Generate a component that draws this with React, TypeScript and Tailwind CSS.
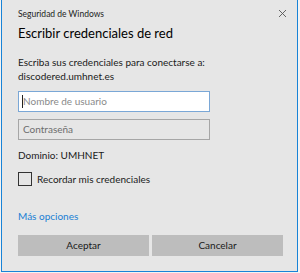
import React from "react";

const font = { fontFamily: '"Segoe UI", Lato, "Noto Sans", sans-serif' };

export default function App() {
  return (
    <div className="flex h-[273px] w-[300px] bg-[#f3f3f3] pl-[1px]" style={font}>
      <div className="flex h-[272px] w-[297px] flex-col border-x border-b border-[#1883d7] bg-[#e6e6e6] pl-[16px] text-[#1a1a1a]">
        <div className="flex h-[20px] items-end justify-between pr-[10px]">
          <span className="text-[8.5px] leading-[12px] text-[#222]">Seguridad de Windows</span>
          <svg width="9" height="9" viewBox="0 0 9 9" className="mb-[2px]">
            <path d="M1 1 L8 8 M8 1 L1 8" stroke="#555" strokeWidth="0.9" />
          </svg>
        </div>
        <h1 className="mt-[3px] text-[13px] leading-[20px] font-normal text-black">Escribir credenciales de red</h1>
        <p className="mt-[12px] text-[10px] leading-[14px]">Escriba sus credenciales para conectarse a:</p>
        <p className="text-[10px] leading-[14px]">discodered.umhnet.es</p>
        <div className="mt-[8px] flex h-[21px] w-[192px] items-center border border-[#7aa7d6] bg-white pl-[3px]">
          <span className="h-[13px] w-px bg-[#222]" />
          <span className="text-[10px] text-[#8a8a8a]">Nombre de usuario</span>
        </div>
        <div className="mt-[7px] flex h-[21px] w-[192px] items-center border border-[#a6a6a6] bg-[#e6e6e6] pl-[4px]">
          <span className="text-[10px] text-[#6d6d6d]">Contraseña</span>
        </div>
        <p className="mt-[8px] text-[10px] leading-[14px]">Dominio: UMHNET</p>
        <div className="mt-[10px] flex h-[14px] items-center gap-[5px]">
          <span className="h-[14px] w-[14px] border border-[#333] bg-[#e6e6e6]" />
          <span className="text-[10px] leading-[14px]">Recordar mis credenciales</span>
        </div>
        <p className="mt-[23px] text-[10px] leading-[14px] text-[#1a7fd4]">Más opciones</p>
        <div className="mt-[12px] flex gap-[3px]">
          <button className="h-[21px] w-[131px] bg-[#bdbdbd] text-[10px] text-[#1a1a1a]">Aceptar</button>
          <button className="h-[21px] w-[131px] bg-[#bdbdbd] text-[10px] text-[#1a1a1a]">Cancelar</button>
        </div>
      </div>
    </div>
  );
}
